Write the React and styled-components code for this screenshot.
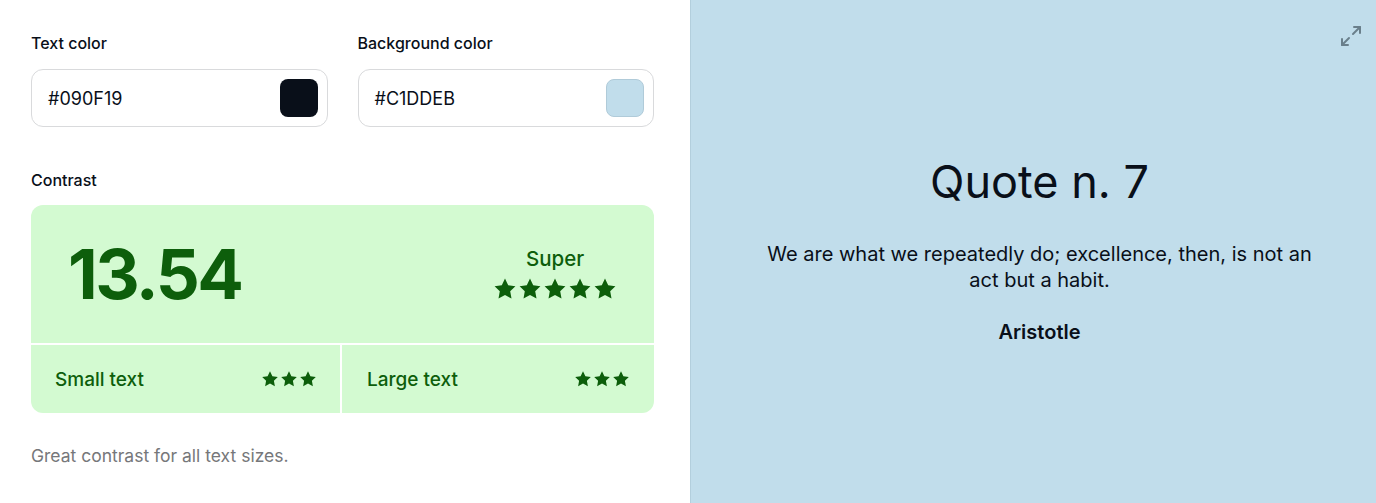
import React from "react";
import styled, { createGlobalStyle } from "styled-components";

const Global = createGlobalStyle`
  html, body { margin: 0; padding: 0; }
  body { font-family: Inter, "Noto Sans", sans-serif; color: #090F19; background: #fff; }
  * { box-sizing: border-box; }
`;

const Page = styled.div`
  display: flex;
  width: 1376px;
  height: 503px;
`;

const Controls = styled.div`
  width: 690px;
  flex: none;
  padding: 33px 36px 0 31px;
  display: flex;
  flex-direction: column;
  background: #fff;
`;

const FieldRow = styled.div`
  display: grid;
  grid-template-columns: 1fr 1fr;
  column-gap: 30px;
`;

const Field = styled.div`
  display: flex;
  flex-direction: column;
`;

const Label = styled.div`
  font-size: 16px;
  line-height: 20px;
  font-weight: 500;
  color: #090F19;
  margin-bottom: ${(p) => p.$mb || 16}px;
`;

const InputBox = styled.div`
  height: 58px;
  border: 1px solid #d9dadc;
  border-radius: 12px;
  display: flex;
  align-items: center;
  justify-content: space-between;
  padding: 0 9px 0 16px;
  background: #fff;
`;

const InputText = styled.span`
  font-size: 18px;
  color: #090F19;
`;

const Swatch = styled.div`
  width: 38px;
  height: 38px;
  border-radius: 8px;
  background: ${(p) => p.$color};
  border: 1px solid ${(p) => p.$border || "transparent"};
`;

const ContrastSection = styled.div`
  margin-top: 43px;
  display: flex;
  flex-direction: column;
`;

const Card = styled.div`
  display: grid;
  grid-template-columns: 309px 1fr;
  grid-template-rows: 138px 68px;
  gap: 2px;
  border-radius: 12px;
  overflow: hidden;
  background: #fff;
`;

const Cell = styled.div`
  background: #d3fad1;
  color: #0d5e0b;
  display: flex;
  align-items: center;
  justify-content: space-between;
  padding: 0 ${(p) => p.$pr || 24}px 0 ${(p) => p.$pl || 24}px;
`;

const Main = styled(Cell)`
  grid-column: 1 / -1;
  padding: 0 37px 0 37px;
`;

const Ratio = styled.div`
  font-size: 69px;
  font-weight: 700;
  letter-spacing: -2.6px;
  line-height: 1;
`;

const Rating = styled.div`
  display: flex;
  flex-direction: column;
  align-items: center;
  gap: 6px;
`;

const RatingLabel = styled.div`
  font-size: 20.5px;
  font-weight: 500;
  line-height: 24px;
`;

const Stars = styled.div`
  display: flex;
  gap: ${(p) => p.$gap}px;
`;

const CellLabel = styled.div`
  font-size: 19px;
  font-weight: 500;
`;

const Note = styled.div`
  margin-top: 31px;
  font-size: 17.5px;
  line-height: 24px;
  color: #76777a;
`;

const Preview = styled.div`
  flex: 1;
  position: relative;
  background: #C1DDEB;
  border-left: 1px solid #b3cfdd;
  display: flex;
  flex-direction: column;
  align-items: center;
  justify-content: center;
  padding: 0 24px 4px 36px;
  text-align: center;
  color: #090F19;
`;

const ExpandButton = styled.button`
  position: absolute;
  top: 24px;
  right: 13px;
  width: 24px;
  height: 24px;
  padding: 0;
  border: none;
  background: transparent;
  color: #6a7f8b;
  display: flex;
  align-items: center;
  justify-content: center;
`;

const Title = styled.h1`
  margin: 0;
  font-size: 45px;
  font-weight: 400;
  line-height: 54px;
`;

const QuoteText = styled.p`
  margin: 32px 0 0;
  max-width: 565px;
  font-size: 20px;
  line-height: 26px;
`;

const Author = styled.div`
  margin-top: 26px;
  font-size: 20px;
  font-weight: 600;
  line-height: 26px;
`;

const Star = ({ size }) => (
  <svg width={size} height={size} viewBox="0 0 24 24" fill="currentColor">
    <path d="M12 1.6l3.2 6.6 7.2 1-5.2 5.1 1.3 7.2L12 18.1l-6.5 3.4 1.3-7.2L1.6 9.2l7.2-1z" />
  </svg>
);

const StarRow = ({ n, size, gap }) => (
  <Stars $gap={gap}>
    {Array.from({ length: n }).map((_, i) => (
      <Star key={i} size={size} />
    ))}
  </Stars>
);

export default function App() {
  return (
    <>
      <Global />
      <Page>
        <Controls>
          <FieldRow>
            <Field>
              <Label>Text color</Label>
              <InputBox>
                <InputText>#090F19</InputText>
                <Swatch $color="#090F19" />
              </InputBox>
            </Field>
            <Field>
              <Label>Background color</Label>
              <InputBox>
                <InputText>#C1DDEB</InputText>
                <Swatch $color="#C1DDEB" $border="#b0cbd9" />
              </InputBox>
            </Field>
          </FieldRow>
          <ContrastSection>
            <Label $mb={15}>Contrast</Label>
            <Card>
              <Main>
                <Ratio>13.54</Ratio>
                <Rating>
                  <RatingLabel>Super</RatingLabel>
                  <StarRow n={5} size={24} gap={1} />
                </Rating>
              </Main>
              <Cell $pr={23}>
                <CellLabel>Small text</CellLabel>
                <StarRow n={3} size={18} gap={1} />
              </Cell>
              <Cell $pl={25}>
                <CellLabel>Large text</CellLabel>
                <StarRow n={3} size={18} gap={1} />
              </Cell>
            </Card>
          </ContrastSection>
          <Note>Great contrast for all text sizes.</Note>
        </Controls>
        <Preview>
          <ExpandButton aria-label="Expand">
            <svg width="24" height="24" viewBox="0 0 24 24" fill="none" stroke="currentColor" strokeWidth="2" strokeLinecap="round" strokeLinejoin="round">
              <polyline points="15 3 21 3 21 9" />
              <polyline points="9 21 3 21 3 15" />
              <line x1="21" y1="3" x2="14" y2="10" />
              <line x1="3" y1="21" x2="10" y2="14" />
            </svg>
          </ExpandButton>
          <Title>Quote n. 7</Title>
          <QuoteText>We are what we repeatedly do; excellence, then, is not an act but a habit.</QuoteText>
          <Author>Aristotle</Author>
        </Preview>
      </Page>
    </>
  );
}
